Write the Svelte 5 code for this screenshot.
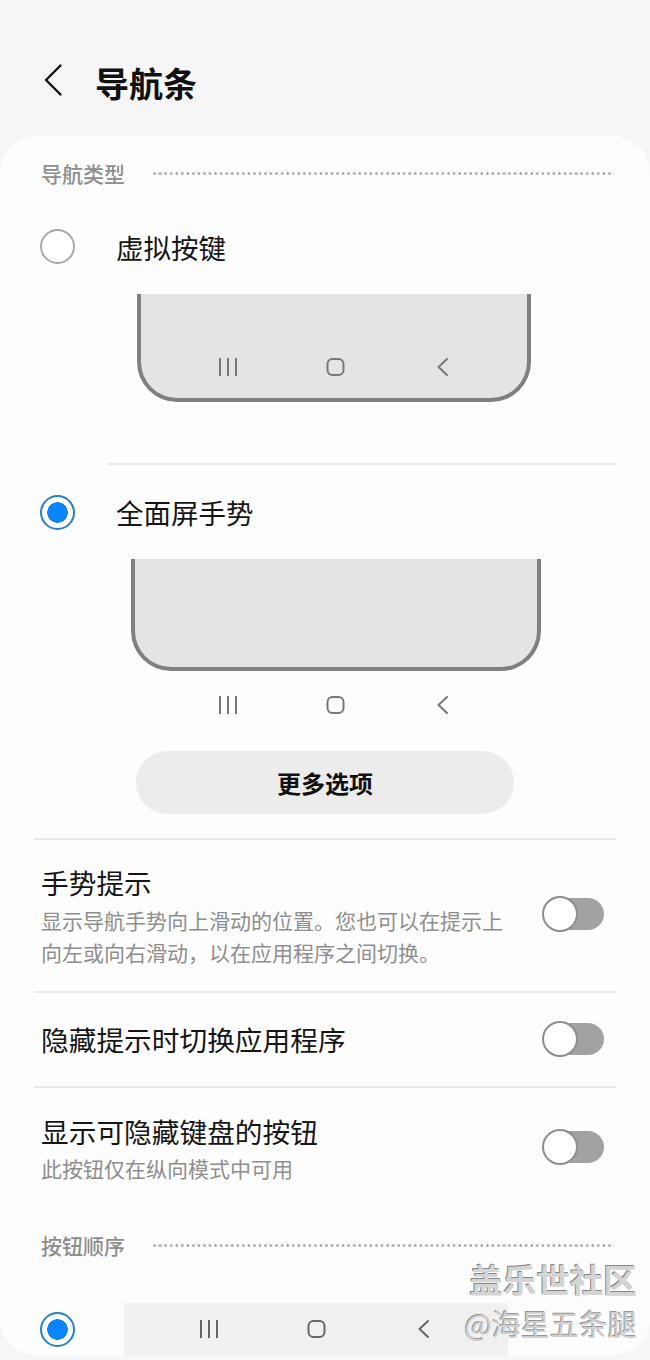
<script>
  const toggleRows = [
    { title: '手势提示', lines: ['显示导航手势向上滑动的位置。您也可以在提示上', '向左或向右滑动\uFF0C以在应用程序之间切换。'], cls: 'row-hint' },
    { title: '隐藏提示时切换应用程序', lines: [], cls: 'row-hide' },
    { title: '显示可隐藏键盘的按钮', lines: ['此按钮仅在纵向模式中可用'], cls: 'row-keyboard' }
  ]
</script>

{#snippet navIcons(color)}
  <svg class="nav-icons" viewBox="0 0 240 20" width="240" height="20" fill="none" stroke={color} stroke-width="2">
    <path d="M5 1v18M13 1v18M21 1v18" />
    <rect x="112.500" y="2" width="16" height="16" rx="5" />
    <path d="M232 2l-8.500 8 8.500 8" stroke-linecap="round" stroke-linejoin="round" />
  </svg>
{/snippet}

{#snippet sectionHead(label)}
  <div class="section-head">
    <span>{label}</span>
    <i class="dots"></i>
  </div>
{/snippet}

<div class="page">
  <header>
    <svg class="back" viewBox="0 0 18 32" width="18" height="32" fill="none" stroke="#111" stroke-width="2.400">
      <path d="M16.500 1.500L2 16l14.500 14.500" stroke-linecap="round" stroke-linejoin="round" />
    </svg>
    <h1>导航条</h1>
  </header>

  <main class="card">
    {@render sectionHead('导航类型')}

    <div class="option first">
      <span class="radio"></span>
      <span>虚拟按键</span>
    </div>
    <div class="phone phone-a">
      {@render navIcons('#777')}
    </div>
    <hr class="inset" />

    <div class="option second">
      <span class="radio on"></span>
      <span>全面屏手势</span>
    </div>
    <div class="phone phone-b"></div>
    <div class="loose-icons">{@render navIcons('#777')}</div>
    <button>更多选项</button>
    <hr class="wide top-rule" />

    {#each toggleRows as row, i}
      <div class="toggle-row {row.cls}">
        <div class="copy">
          <div class="title">{row.title}</div>
          {#each row.lines as line}
            <div class="desc">{line}</div>
          {/each}
        </div>
        <span class="switch"><b></b></span>
      </div>
      {#if i < toggleRows.length - 1}
        <hr class="wide" />
      {/if}
    {/each}

    {@render sectionHead('按钮顺序')}
    <div class="option third">
      <span class="radio on"></span>
    </div>
  </main>

  <div class="nav-strip">{@render navIcons('#666')}</div>
  <div class="watermark">
    <div class="brand">盖乐世社区</div>
    <div class="user">@海星五条腿</div>
  </div>
</div>

<style>
  :global(body) {
    margin: 0;
    background: #f6f6f6;
  }

  .page {
    position: relative;
    width: 650px;
    height: 1360px;
    overflow: hidden;
    font-family: "Noto Sans CJK SC", "Noto Sans", sans-serif;
    color: #151515;
  }

  header {
    display: flex;
    align-items: center;
    height: 136px;
    box-sizing: border-box;
    padding: 34px 0 4px 44px;
    gap: 33px;
  }

  .back {
    margin-top: -6px;
  }

  h1 {
    margin: 0;
    font-size: 34px;
    font-weight: 700;
    line-height: 44px;
    color: #111;
  }

  .card {
    height: 1219px;
    background: #fdfdfd;
    border-radius: 36px;
  }

  .section-head {
    display: flex;
    align-items: center;
    height: 36px;
    padding: 20px 36px 0 41px;
    gap: 28px;
    font-size: 21px;
    font-weight: 500;
    color: #8e8e8e;
  }

  .section-head span {
    margin-top: -2px;
  }

  .section-head .dots {
    flex: 1;
    height: 3px;
    margin-top: -2px;
    background: radial-gradient(circle at 1.500px 1.500px, #a4a4a4 1.200px, transparent 1.400px) 0 0 / 5.550px 3px repeat-x;
  }

  .option {
    display: flex;
    align-items: center;
    height: 50px;
    padding-left: 40px;
    gap: 41px;
    font-size: 27.500px;
    line-height: 50px;
  }

  .option.first {
    margin-top: 30px;
  }

  .option.second {
    margin-top: 22px;
  }

  .option.third {
    margin-top: 42px;
  }

  .radio {
    flex: none;
    width: 35px;
    height: 35px;
    margin-top: -4px;
    box-sizing: border-box;
    border: 2px solid #a8a8a8;
    border-radius: 50%;
    background: #fff;
  }

  .first .radio {
    margin-top: -2px;
  }

  .second .radio {
    margin-top: 0;
  }

  .radio.on {
    border-color: #2a80c8;
    background: radial-gradient(circle, #0a84ff 0 10px, #fff 10.500px);
  }

  .phone {
    box-sizing: border-box;
    display: flex;
    align-items: flex-end;
    justify-content: center;
    background: #e4e4e4;
    border: 4px solid #808080;
    border-top: 0;
    border-radius: 0 0 40px 40px;
  }

  .phone-a {
    width: 394px;
    height: 108px;
    margin: 22px 0 0 137px;
    padding: 0 0 21px 2px;
  }

  .phone-b {
    width: 410px;
    height: 112px;
    margin: 22px 0 0 131px;
  }

  .loose-icons {
    width: 240px;
    height: 20px;
    margin: 24px 0 0 215px;
  }

  .nav-icons {
    display: block;
  }

  hr {
    height: 2px;
    margin: 0;
    border: 0;
    background: #e9e9e9;
  }

  hr.inset {
    margin: 61px 34px 0 108px;
  }

  hr.wide {
    margin: 0 34px;
  }

  hr.top-rule {
    margin-top: 24px;
  }

  button {
    display: block;
    width: 378px;
    height: 63px;
    margin: 36px 0 0 136px;
    padding: 0;
    border: 0;
    border-radius: 32px;
    background: #ececec;
    font: 700 24px "Noto Sans CJK SC", sans-serif;
    color: #111;
  }

  .toggle-row {
    display: flex;
    align-items: center;
    justify-content: space-between;
    box-sizing: border-box;
    padding: 0 46px 0 41px;
  }

  .row-hint {
    height: 151px;
    padding-bottom: 3px;
  }

  .row-hint .copy {
    padding-top: 2px;
  }

  .row-hint .title {
    margin-bottom: 2px;
  }

  .row-hide {
    height: 93px;
    padding-bottom: 2px;
  }

  .row-keyboard {
    height: 120px;
    padding-bottom: 2px;
  }

  .row-keyboard .title {
    margin-bottom: 1px;
  }

  .title {
    font-size: 27.700px;
    line-height: 40px;
    white-space: nowrap;
  }

  .desc {
    font-size: 21px;
    line-height: 32px;
    color: #8e8e8e;
    white-space: nowrap;
  }

  .switch {
    position: relative;
    flex: none;
    width: 61px;
    height: 32px;
    border-radius: 16px;
    background: #a2a2a2;
  }

  .switch b {
    position: absolute;
    left: -1px;
    top: -2px;
    width: 36px;
    height: 36px;
    box-sizing: border-box;
    border: 2px solid #8e8e8e;
    border-radius: 50%;
    background: #fff;
  }

  .nav-strip {
    position: absolute;
    left: 124px;
    top: 1303px;
    display: flex;
    align-items: center;
    justify-content: center;
    width: 384px;
    height: 52px;
    background: #f0f0f0;
  }

  .watermark {
    position: absolute;
    right: 13px;
    top: 1257px;
    text-align: right;
    white-space: nowrap;
  }

  .brand {
    font-size: 33.500px;
    font-weight: 700;
    line-height: 44px;
    color: #d4d4d4;
    text-shadow: -1px -1px 0 #868686;
  }

  .user {
    font-size: 29px;
    line-height: 45px;
    color: #cfcfcf;
    text-shadow: -1px -1px 0 #969696;
  }
</style>
